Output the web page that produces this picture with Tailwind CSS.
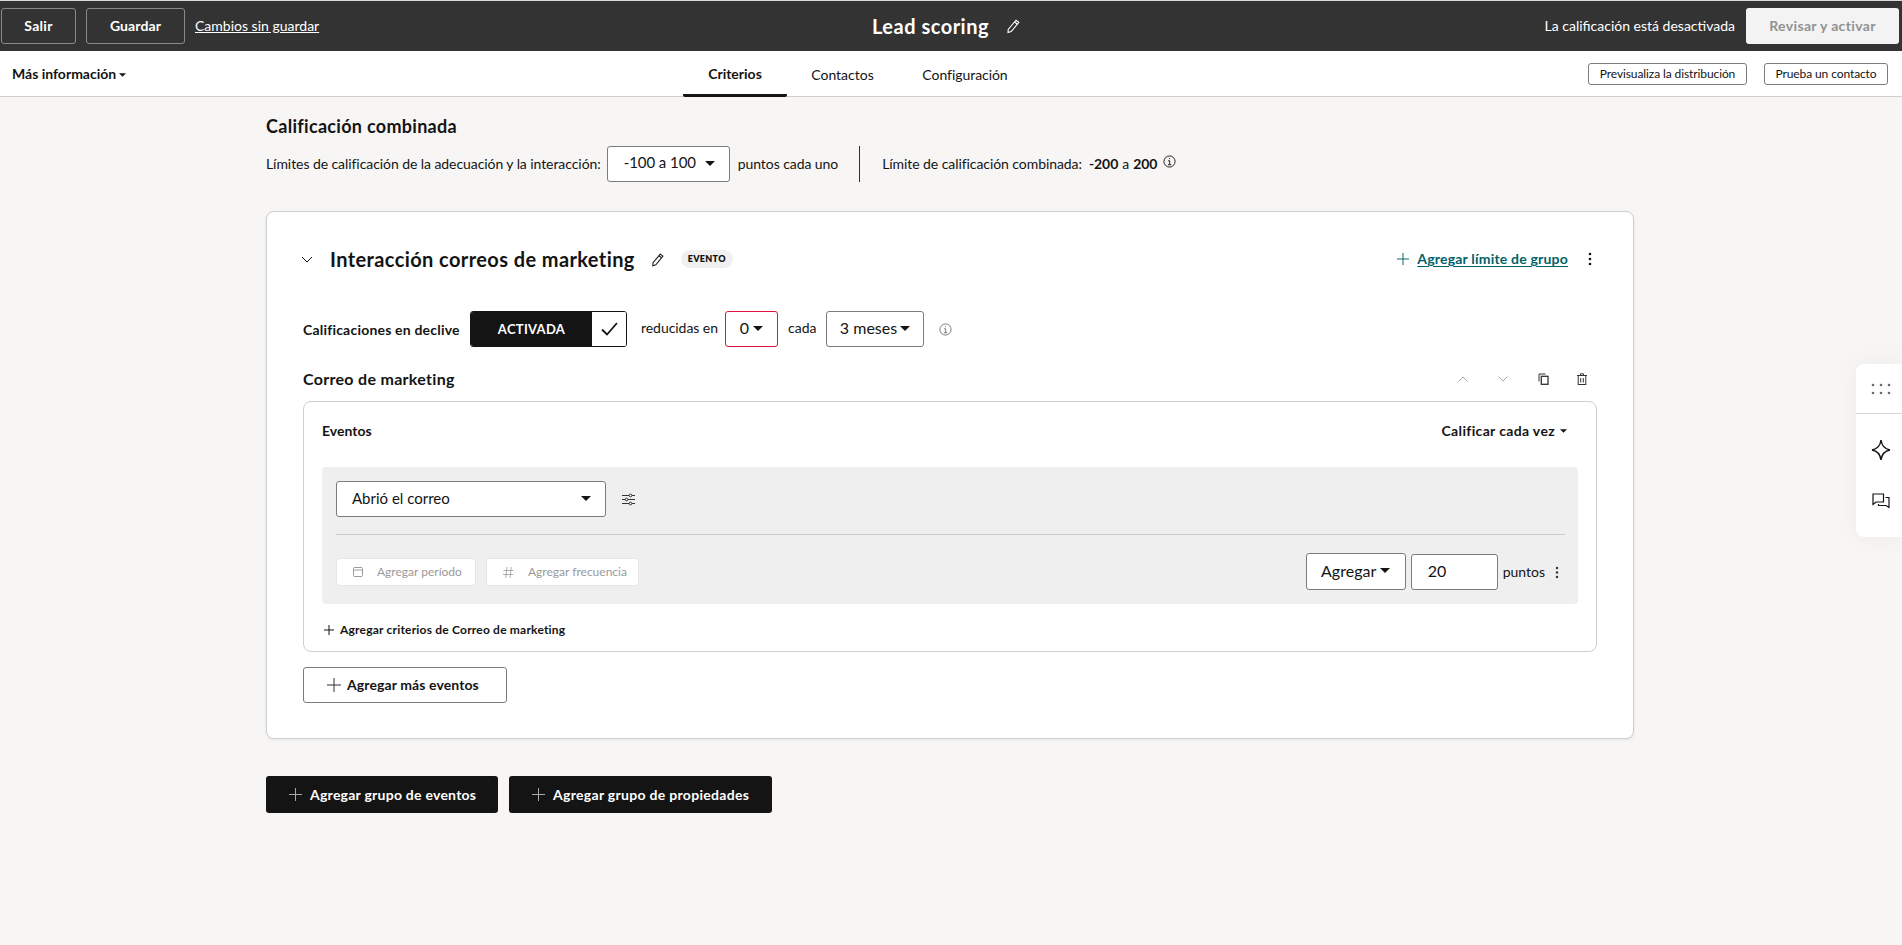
<!DOCTYPE html>
<html lang="es">
<head>
    <meta charset="UTF-8">
    <title>Lead scoring</title>
    <script src="https://cdn.jsdelivr.net/npm/@tailwindcss/browser@4"></script>
</head>
<body class="bg-[#f7f6f4] h-screen overflow-hidden text-[#141414] font-[Lato,sans-serif]">
    <!-- Top bar -->
    <header class="h-[51px] bg-[#333333] border-t border-[#d8d8d8] grid grid-cols-[1fr_auto_1fr] items-center pl-px pr-[3px] text-white">
        <div class="flex items-center">
            <button class="w-[75px] h-9 border border-[#8a8a8a] rounded-[3px] text-sm font-bold tracking-[0.3px]">Salir</button>
            <button class="ml-[10px] w-[99px] h-9 border border-[#8a8a8a] rounded-[3px] text-sm font-bold tracking-[0.1px]">Guardar</button>
            <a class="ml-[10px] text-sm underline -mt-px">Cambios sin guardar</a>
        </div>
        <div class="flex items-center pr-[7px]">
            <span class="text-xl font-bold tracking-[0.5px]">Lead scoring</span>
            <svg class="ml-4 w-4 h-4" viewBox="0 0 16 16" fill="none" stroke="currentColor" stroke-width="1.1"><path d="M11 2.2l2.8 2.2-7.6 9.2-3.2 1 .2-3.2z"/><path d="M9.6 4l2.8 2.2"/></svg>
        </div>
        <div class="flex items-center justify-end">
            <span class="text-sm -mt-px">La calificación está desactivada</span>
            <button class="ml-[11px] w-[153px] h-9 bg-[#f3f3f3] rounded-[3px] text-sm font-bold text-[#929292] tracking-[0.35px]">Revisar y activar</button>
        </div>
    </header>

    <!-- Tabs -->
    <nav class="h-[46px] bg-white border-b border-[#cfcfcf] flex relative">
        <div class="w-[683px] pl-3 flex items-center text-sm font-bold">
            Más información
            <svg class="ml-[3px] w-[7px] h-1 mt-0.5" viewBox="0 0 8 4"><path d="M0 0h8L4 4z" fill="#141414"/></svg>
        </div>
        <a class="w-[104px] h-[46px] flex items-center justify-center text-sm font-bold border-b-[3px] border-[#141414] rounded-b-[2px] pt-[3px]">Criterios</a>
        <a class="w-[111px] flex items-center justify-center text-sm pt-[2px]">Contactos</a>
        <a class="w-[134px] flex items-center justify-center text-sm pt-[2px] tracking-[-0.05px]">Configuración</a>
        <div class="ml-auto flex items-center pr-[14px] gap-[17px]">
            <button class="w-[159px] h-[22px] border border-[#7c7c7c] rounded-[3px] text-xs tracking-[-0.1px]">Previsualiza la distribución</button>
            <button class="w-[124px] h-[22px] border border-[#7c7c7c] rounded-[3px] text-xs tracking-[-0.1px]">Prueba un contacto</button>
        </div>
    </nav>

    <main class="w-[1368px] ml-[266px]">
        <h2 class="pt-[19px] text-lg font-bold leading-5 tracking-[0.3px]">Calificación combinada</h2>
        <div class="mt-[10px] h-9 flex items-center text-sm tracking-[-0.07px]">
            <span>Límites de calificación de la adecuación y la interacción:</span>
            <div class="ml-[6px] w-[123px] h-9 bg-white border border-[#7c7c7c] rounded-[3px] flex items-center justify-between pl-4 pr-[14px] pb-[2px] text-[15px]">
                -100 a 100
                <svg class="w-[10px] h-[5px]" viewBox="0 0 10 5"><path d="M0 0h10L5 5z" fill="#141414"/></svg>
            </div>
            <span class="ml-[8px]">puntos cada uno</span>
            <div class="ml-[21px] w-px h-9 bg-[#1f3350]"></div>
            <span class="ml-[22px]">Límite de calificación combinada:</span>
            <b class="ml-[7px]">-200</b><span class="mx-[4px]">a</span><b>200</b>
            <svg class="ml-[6px] -mt-[5px] w-[13px] h-[13px]" viewBox="0 0 14 14" fill="none" stroke="#141414"><circle cx="7" cy="7" r="6"/><path d="M5.5 6.2H7.2V10.5M5.3 10.5h3.6M7 3.4v1.1"/></svg>
        </div>

        <!-- Group card -->
        <section class="mt-[29px] h-[528px] bg-white border border-[#cfcfcf] rounded-lg shadow-[0_1px_3px_rgba(0,0,0,0.08)] px-9">
            <div class="h-[75px] pt-[19px] flex items-center">
                <svg class="-ml-[2px] w-[12px] h-[7px]" viewBox="0 0 12 7" fill="none" stroke="#141414"><path d="M1 1l5 5 5-5"/></svg>
                <h3 class="ml-[17px] text-xl font-bold tracking-[0.4px]">Interacción correos de marketing</h3>
                <svg class="ml-[15px] w-[15px] h-[15px]" viewBox="0 0 16 16" fill="none" stroke="#141414" stroke-width="1.1"><path d="M11 2.2l2.8 2.2-7.6 9.2-3.2 1 .2-3.2z"/><path d="M9.6 4l2.8 2.2"/></svg>
                <span class="ml-[16px] w-[52px] h-[18px] rounded-full bg-[#f0f0f0] flex items-center justify-center text-[9px] font-extrabold tracking-[0.3px]">EVENTO</span>
                <svg class="ml-auto w-[12px] h-[12px]" viewBox="0 0 12 12" stroke="#0b6b70"><path d="M6 0v12M0 6h12"/></svg>
                <a class="ml-[8px] text-sm font-bold text-[#00626a] underline underline-offset-2 tracking-[0.2px]">Agregar límite de grupo</a>
                <svg class="ml-[20px] mr-[5px] w-[4px] h-[14px]" viewBox="0 0 4 14" fill="#141414"><circle cx="2" cy="2" r="1.3"/><circle cx="2" cy="7" r="1.3"/><circle cx="2" cy="12" r="1.3"/></svg>
            </div>

            <!-- Decay row -->
            <div class="mt-6 h-9 flex items-center text-sm">
                <span class="font-bold w-[167px] pt-0.5 tracking-[0.2px] whitespace-nowrap">Calificaciones en declive</span>
                <div class="w-[157px] h-9 flex rounded-[3px] overflow-hidden border border-[#141414]">
                    <div class="w-[121px] bg-[#141414] text-white font-bold text-[13px] flex items-center justify-center tracking-[0.3px]">ACTIVADA</div>
                    <div class="flex-1 bg-white flex items-center justify-center">
                        <svg class="w-[17px] h-[14px]" viewBox="0 0 17 14" fill="none" stroke="#141414" stroke-width="1.8"><path d="M1 7.5l5 5L16 1"/></svg>
                    </div>
                </div>
                <span class="ml-[14px] w-[76px] whitespace-nowrap tracking-[-0.05px] pb-[2px]">reducidas en</span>
                <div class="ml-[8px] w-[53px] h-9 bg-white border border-[#e0123f] rounded-[3px] flex items-center justify-center gap-[4px] pb-[2px] text-base">
                    0<svg class="w-[10px] h-[5px]" viewBox="0 0 10 5"><path d="M0 0h10L5 5z" fill="#141414"/></svg>
                </div>
                <span class="ml-[10px] w-[38px] pb-[2px]">cada</span>
                <div class="w-[98px] h-9 bg-white border border-[#7c7c7c] rounded-[3px] flex items-center justify-center gap-[3px] pb-[2px] text-base">
                    3 meses<svg class="w-[10px] h-[5px]" viewBox="0 0 10 5"><path d="M0 0h10L5 5z" fill="#141414"/></svg>
                </div>
                <svg class="ml-[15px] w-[13px] h-[13px]" viewBox="0 0 14 14" fill="none" stroke="#6f6f6f"><circle cx="7" cy="7" r="6"/><path d="M5.5 6.2H7.2V10.5M5.3 10.5h3.6M7 3.4v1.1"/></svg>
            </div>

            <!-- Event card header -->
            <div class="mt-[20px] h-[24px] flex items-center">
                <h4 class="text-base font-bold tracking-[0.3px]">Correo de marketing</h4>
                <div class="ml-auto mr-[10px] flex items-center">
                    <svg class="w-[10px] h-[6px]" viewBox="0 0 10 6" fill="none" stroke="#a8a8a8"><path d="M.5 5.5L5 1l4.500 4.500"/></svg>
                    <svg class="ml-[30px] w-[10px] h-[6px]" viewBox="0 0 10 6" fill="none" stroke="#a8a8a8"><path d="M.5.5L5 5l4.500-4.500"/></svg>
                    <svg class="ml-[30px] w-[11px] h-[12px]" viewBox="0 0 11 12" fill="none" stroke="#333"><path d="M1 8.500V1h6.500"/><rect x="3.300" y="3.300" width="6.700" height="8" stroke-width="1.300"/></svg>
                    <svg class="ml-[28px] w-[10px] h-[12px]" viewBox="0 0 10 12" fill="none" stroke="#333"><path d="M0 2.500h10M3.500 2.500V.8h3v1.700"/><rect x="1.200" y="2.500" width="7.600" height="9"/><path d="M3.700 5v4.500M6.300 5v4.500"/></svg>
                </div>
            </div>

            <div class="mt-[10px] h-[251px] border border-[#cfcfcf] rounded-lg px-[18px]">
                <div class="h-[65px] pb-[8px] flex items-center justify-between pr-[11px]">
                    <span class="text-sm font-bold">Eventos</span>
                    <span class="text-sm font-bold flex items-center tracking-[0.35px]">Calificar cada vez<svg class="ml-[5px] w-[7px] h-1" viewBox="0 0 8 4"><path d="M0 0h8L4 4z" fill="#141414"/></svg></span>
                </div>
                <div class="h-[137px] bg-[#efefef] rounded-[4px] pl-[14px] pr-[13px] pt-[14px]">
                    <div class="flex items-center">
                        <div class="w-[270px] h-9 bg-white border border-[#7c7c7c] rounded-[3px] flex items-center justify-between pl-[15px] pr-[14px] pb-[2px] text-[15px]">
                            Abrió el correo
                            <svg class="w-[10px] h-[5px]" viewBox="0 0 10 5"><path d="M0 0h10L5 5z" fill="#141414"/></svg>
                        </div>
                        <svg class="ml-[16px] w-[13px] h-[13px]" viewBox="0 0 13 13" fill="none" stroke="#333"><path d="M0 2.500h13M0 6.500h13M0 10.500h13"/><circle cx="8.500" cy="2.500" r="1.400" fill="#efefef"/><circle cx="4.500" cy="6.500" r="1.400" fill="#efefef"/><circle cx="8.500" cy="10.500" r="1.400" fill="#efefef"/></svg>
                    </div>
                    <div class="mt-[17px] h-px bg-[#cccccc]"></div>
                    <div class="mt-[19px] flex items-center">
                        <button class="w-[140px] h-[28px] bg-white rounded-[3px] border border-[#e6e6e6] flex items-center pl-[16px] text-xs text-[#9a9a9a]">
                            <svg class="w-[10px] h-[10px]" viewBox="0 0 10 10" fill="none" stroke="#9a9a9a"><rect x=".5" y=".5" width="9" height="9" rx="1"/><path d="M.5 3h9"/></svg>
                            <span class="ml-[14px]">Agregar período</span>
                        </button>
                        <button class="ml-[10px] w-[153px] h-[28px] bg-white rounded-[3px] border border-[#e6e6e6] flex items-center pl-[16px] text-xs text-[#9a9a9a]">
                            <svg class="w-[11px] h-[11px]" viewBox="0 0 11 11" fill="none" stroke="#9a9a9a" stroke-width=".8"><path d="M4 0L2.800 11M8.200 0L7 11M.5 3.500h10M0 7.500h10"/></svg>
                            <span class="ml-[14px]">Agregar frecuencia</span>
                        </button>
                        <div class="ml-auto -mt-[1px] w-[100px] h-[37px] bg-white border border-[#7c7c7c] rounded-[3px] flex items-center justify-center gap-[4px] pb-[2px] text-base">
                            Agregar<svg class="w-[10px] h-[5px]" viewBox="0 0 10 5"><path d="M0 0h10L5 5z" fill="#141414"/></svg>
                        </div>
                        <div class="ml-[5px] -mt-[1px] w-[87px] h-9 bg-white border border-[#7c7c7c] rounded-[3px] flex items-center pl-4 pb-[2px] text-base">20</div>
                        <span class="ml-[5px] text-sm">puntos</span>
                        <svg class="ml-[10px] mr-[6px] w-[4px] h-[13px]" viewBox="0 0 4 13" fill="#333"><circle cx="2" cy="2" r="1.200"/><circle cx="2" cy="6.500" r="1.200"/><circle cx="2" cy="11" r="1.200"/></svg>
                    </div>
                </div>
                <div class="mt-[18px] flex items-center text-xs font-bold">
                    <svg class="ml-[2px] w-[10px] h-[10px]" viewBox="0 0 10 10" stroke="#141414"><path d="M5 0v10M0 5h10"/></svg>
                    <span class="ml-[6px] tracking-[0.2px]">Agregar criterios de Correo de marketing</span>
                </div>
            </div>

            <button class="mt-[15px] w-[204px] h-9 bg-white border border-[#7c7c7c] rounded-[3px] flex items-center pl-[23px] text-sm font-bold tracking-[0.1px]">
                <svg class="w-[14px] h-[14px]" viewBox="0 0 14 14" stroke="#333"><path d="M7 0v14M0 7h14"/></svg>
                <span class="ml-[6px]">Agregar más eventos</span>
            </button>
        </section>

        <div class="mt-[37px] flex gap-[11px]">
            <button class="w-[232px] h-[37px] bg-[#141414] rounded-[3px] flex items-center pl-[23px] text-sm font-bold text-white tracking-[0.25px]">
                <svg class="w-[13px] h-[13px]" viewBox="0 0 13 13" stroke="#a8a8a8"><path d="M6.500 0v13M0 6.500h13"/></svg>
                <span class="ml-[8px]">Agregar grupo de eventos</span>
            </button>
            <button class="w-[263px] h-[37px] bg-[#141414] rounded-[3px] flex items-center pl-[23px] text-sm font-bold text-white tracking-[0.3px]">
                <svg class="w-[13px] h-[13px]" viewBox="0 0 13 13" stroke="#a8a8a8"><path d="M6.500 0v13M0 6.500h13"/></svg>
                <span class="ml-[8px]">Agregar grupo de propiedades</span>
            </button>
        </div>
    </main>

    <!-- Floating side panel -->
    <aside class="fixed right-0 top-[364px] w-[46px] h-[173px] bg-white rounded-l-lg shadow-[0_0_24px_rgba(0,0,0,0.05)] flex flex-col items-center">
        <div class="w-full h-[50px] pl-[4px] border-b border-[#d6d6d6] flex items-center justify-center">
            <svg class="w-[20px] h-[12px]" viewBox="0 0 20 12" fill="#6a6a6a"><circle cx="2" cy="2" r="1.300"/><circle cx="10" cy="2" r="1.300"/><circle cx="18" cy="2" r="1.300"/><circle cx="2" cy="10" r="1.300"/><circle cx="10" cy="10" r="1.300"/><circle cx="18" cy="10" r="1.300"/></svg>
        </div>
        <svg class="ml-[4px] mt-[25px] w-[20px] h-[22px]" viewBox="0 0 20 22" fill="none" stroke="#141414" stroke-width="1.400"><path d="M10 1c.8 6 3 9 9 10-6 1-8.200 4-9 10-.8-6-3-9-9-10 6-1 8.200-4 9-10z"/></svg>
        <svg class="ml-[4px] mt-[32px] w-[18px] h-[16px]" viewBox="0 0 18 16" fill="none" stroke="#141414" stroke-width="1.200"><path d="M1 1h10.500v8H4L1 11.500zM13.500 4.500H17v10l-3-2H6.500V11"/></svg>
    </aside>
</body>
</html>
